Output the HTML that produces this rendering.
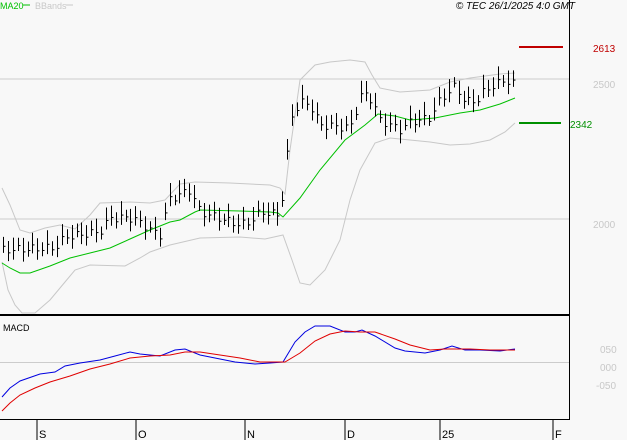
<!DOCTYPE html><html><head><style>body{margin:0;background:#f8f8f8}svg{display:block;font-family:"Liberation Sans",sans-serif}</style></head><body>
<svg id="s" width="627" height="440" xmlns="http://www.w3.org/2000/svg">
<rect width="627" height="440" fill="#f8f8f8"/>
<line x1="0" y1="79" x2="569" y2="79" stroke="#ccc"/>
<line x1="0" y1="219" x2="569" y2="219" stroke="#ccc"/>
<line x1="0" y1="362.5" x2="569" y2="362.5" stroke="#ccc"/>
<polyline fill="none" stroke="#c8c8c8" points="2,188 10,205 20,230 30,233 45,228 60,225 75,229 90,215 100,203 130,202 150,203 165,200 180,184 195,182 230,183 270,185 280,188 285,194 290,150 300,80 315,65 330,62 350,60 365,62 372,75 380,88 400,92 430,90 450,82 470,78 500,74 515,73"/>
<polyline fill="none" stroke="#c8c8c8" points="2,262 8,290 15,305 22,313 35,313 50,300 65,282 75,270 90,265 125,266 140,258 150,252 170,245 200,238 240,237 265,239 283,235 292,260 300,283 310,285 325,270 340,240 350,200 360,170 375,143 390,138 410,140 430,142 450,145 470,144 490,140 505,132 515,123"/>
<polyline fill="none" stroke="#00c000" points="2,263 10,268 20,273 30,273 50,266 70,258 90,253 110,248 130,239 150,230 170,222 180,220 195,212 200,210 240,211 270,212 278,213 283,217 300,198 320,170 345,140 365,125 378,114 395,116 410,120 435,118 460,113 480,110 500,104 515,98"/>
<g id="bars" stroke="#000" stroke-width="1"></g>
<line x1="519" y1="47" x2="563" y2="47" stroke="#c00000" stroke-width="2"/>
<line x1="519" y1="123" x2="561" y2="123" stroke="#009000" stroke-width="2"/>
<line x1="0" y1="315" x2="570" y2="315" stroke="#000" stroke-width="2"/>
<line x1="569.5" y1="0" x2="569.5" y2="419" stroke="#000"/>
<line x1="0" y1="419.5" x2="570" y2="419.5" stroke="#000"/>
<polyline fill="none" stroke="#0000e0" points="2,397 10,388 20,381 40,374 55,372 65,366 80,363 100,360 115,356 130,352 140,354 150,355 160,356 175,350 185,349 200,355 215,358 235,362 255,364 270,363 283,362 295,342 305,332 315,326 330,326 345,332 355,332 362,330 375,336 395,348 405,351 425,353 440,350 452,346 465,350 480,350 500,351 515,349"/>
<polyline fill="none" stroke="#e00000" points="2,411 10,403 20,395 35,388 50,382 70,376 90,369 110,364 130,358 150,356 170,355 185,352 200,352 220,355 240,358 260,362 285,362 300,353 315,341 330,334 345,331 360,332 375,332 395,339 410,345 430,350 445,349 470,349 490,350 515,350"/>
<g stroke="#000"><line x1="37" y1="419" x2="37" y2="440"/><line x1="136" y1="419" x2="136" y2="440"/><line x1="245" y1="419" x2="245" y2="440"/><line x1="345" y1="419" x2="345" y2="440"/><line x1="440" y1="419" x2="440" y2="440"/><line x1="553" y1="419" x2="553" y2="440"/></g>
<g font-size="11" fill="#000"><text x="39" y="438">S</text><text x="138" y="438">O</text><text x="247" y="438">N</text><text x="347" y="438">D</text><text x="442" y="438">25</text><text x="555" y="438">F</text></g>
<text x="0" y="9" font-size="9" fill="#00c000">MA20</text><line x1="23" y1="5" x2="30" y2="5" stroke="#00c000"/>
<text x="35" y="9" font-size="9" fill="#c8c8c8">BBands</text><line x1="66" y1="5" x2="73" y2="5" stroke="#c8c8c8"/>
<text x="575" y="9" font-size="10" font-style="italic" text-anchor="end" fill="#000">© TEC 26/1/2025 4:0 GMT</text>
<text x="593" y="52" font-size="10" fill="#c00000">2613</text>
<text x="593" y="88" font-size="10" fill="#c8c8c8">2500</text>
<text x="570" y="128" font-size="10" fill="#009000">2342</text>
<text x="593" y="228" font-size="10" fill="#c8c8c8">2000</text>
<text x="3" y="331" font-size="9" fill="#000">MACD</text>
<g font-size="10" fill="#c8c8c8"><text x="600" y="353">050</text><text x="600" y="371">000</text><text x="596" y="389">-050</text></g>
</svg>
<script>
var pts=[[3,250],[55,248],[65,237],[100,232],[110,218],[130,218],[140,222],[150,230],[160,235],[168,200],[190,190],[200,212],[240,225],[250,222],[260,212],[280,215],[286,170],[290,120],[300,102],[310,105],[320,125],[350,128],[362,92],[372,100],[380,120],[400,130],[410,122],[430,118],[440,100],[455,86],[465,102],[478,100],[485,90],[505,80],[515,85]];
function cl(x){for(var i=0;i<pts.length-1;i++){if(x<=pts[i+1][0]){var a=pts[i],b=pts[i+1];return a[1]+(b[1]-a[1])*(x-a[0])/(b[0]-a[0]);}}return pts[pts.length-1][1];}
var g=document.getElementById('bars'),h='';
for(var x=3;x<=515;x+=4.9){var c=cl(x)+Math.sin(x*1.7)*4;var r=6+Math.abs(Math.sin(x*0.9))*8;var xx=Math.round(x)+0.5;
h+='<line x1="'+xx+'" y1="'+(c-r)+'" x2="'+xx+'" y2="'+(c+r*0.7)+'"/><line x1="'+xx+'" y1="'+c+'" x2="'+(xx+2)+'" y2="'+c+'"/>';}
g.innerHTML=h;
</script>
</body></html>
